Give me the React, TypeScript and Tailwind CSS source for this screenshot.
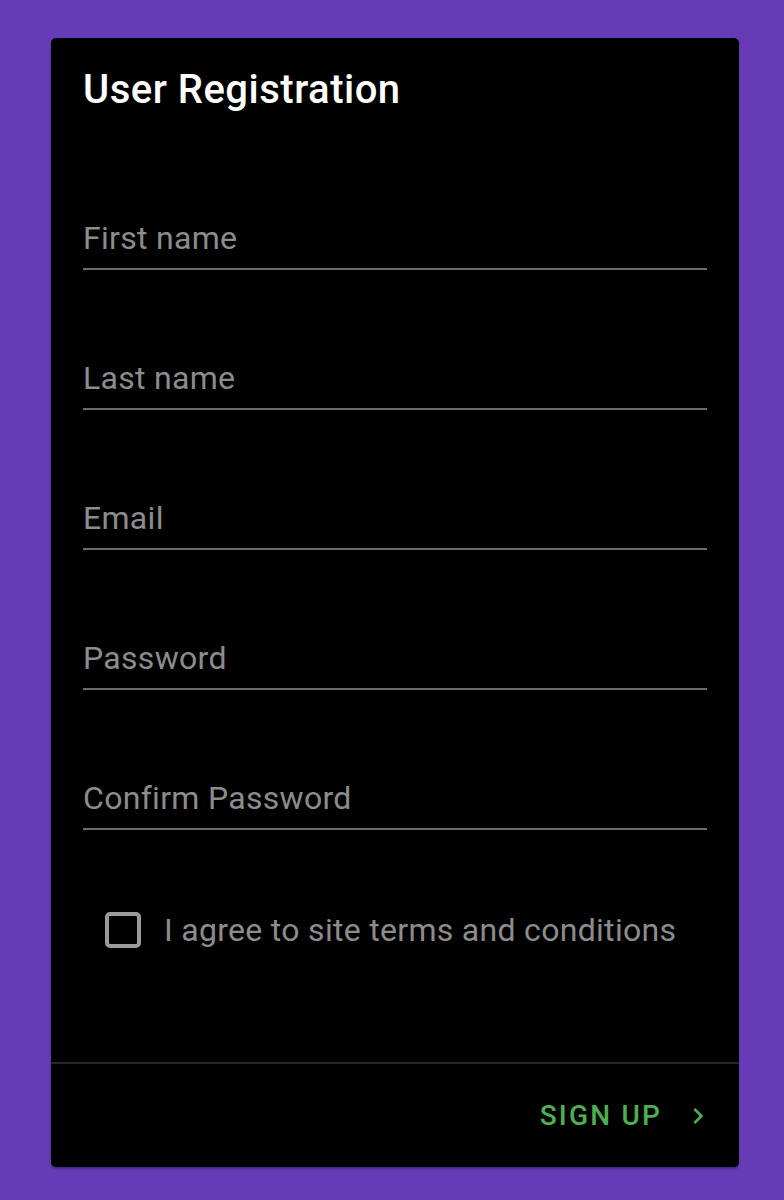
import React from "react";

const fields = ["First name", "Last name", "Email", "Password", "Confirm Password"];

function Field({ label }: { label: string }) {
  return (
    <div className="flex flex-col">
      <span className="text-[32px] leading-[40px] tracking-[0.3px] text-[#8c8c8c]">{label}</span>
      <div className="mt-[10px] border-b-2 border-[#6b6b6b]" />
    </div>
  );
}

export default function App() {
  return (
    <div className="min-h-screen bg-[#673ab7] pt-[38px] font-['Roboto',sans-serif]">
      <div className="ml-[51px] w-[688px] h-[1129px] bg-black rounded-[5px] shadow-[0_2px_2px_rgba(0,0,0,0.3)] flex flex-col">
        <div className="px-[32px] pt-[28px]">
          <h1 className="text-[40px] leading-[48px] font-medium tracking-[0.5px] text-white">User Registration</h1>
        </div>

        <div className="px-[32px] pt-[104px] flex flex-col gap-[88px]">
          {fields.map((f) => (
            <Field key={f} label={f} />
          ))}
        </div>

        <label className="flex items-center mt-[80px] ml-[54px] h-[40px]">
          <span className="w-[36px] h-[36px] rounded-[5px] border-4 border-[#9a9a9a]" />
          <span className="ml-[23px] text-[32px] leading-[40px] tracking-[0.3px] text-[#8c8c8c]">
            I agree to site terms and conditions
          </span>
        </label>

        <div className="flex-1" />

        <div className="border-t-2 border-[#262626] h-[105px] flex items-center justify-end pr-[25px]">
          <span className="text-[28px] leading-[32px] font-medium tracking-[2.2px] text-[#4caf50]">SIGN UP</span>
          <svg viewBox="0 0 24 24" className="w-[32px] h-[32px] ml-[20px] fill-[#4caf50]">
            <path d="M10 6 8.59 7.41 13.17 12l-4.58 4.59L10 18l6-6z" />
          </svg>
        </div>
      </div>
    </div>
  );
}
